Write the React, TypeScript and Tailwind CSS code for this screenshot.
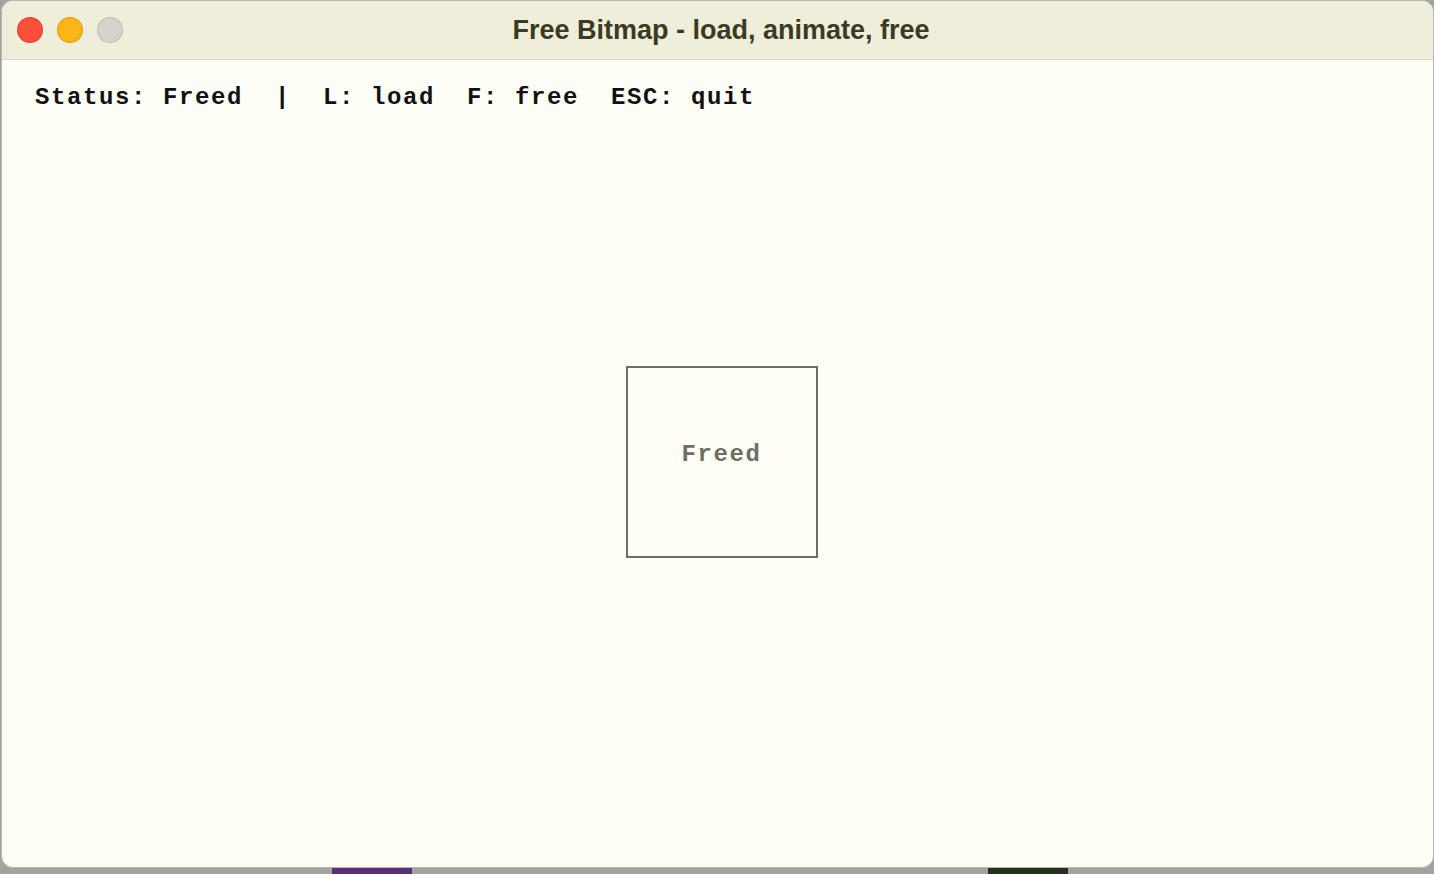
import React from "react";

const mono = { fontFamily: '"Liberation Mono", "DejaVu Sans Mono", monospace' };

function TrafficLights() {
  return (
    <div className="flex items-center gap-4 pl-[16px]">
      <span className="h-6 w-6 rounded-full bg-[#fe4f3c] ring-1 ring-[#d9412f]" />
      <span className="h-6 w-6 rounded-full bg-[#fdb618] ring-1 ring-[#dc9a14]" />
      <span className="h-6 w-6 rounded-full bg-[#d5d4ca] ring-1 ring-[#bdbcb2]" />
    </div>
  );
}

export default function App() {
  return (
    <div className="h-[874px] w-[1434px] overflow-hidden bg-[#a3a3a0]">
      <div className="ml-[1px] flex h-[868px] w-[1433px] flex-col overflow-hidden rounded-[12px] border border-[#b9b8ae] bg-[#fefef6]">
        {/* title bar */}
        <div className="relative flex h-[59px] shrink-0 items-center border-b border-[#d6d5c8] bg-[#efeedb]">
          <TrafficLights />
          <div
            className="absolute inset-x-0 top-0 flex h-full items-center justify-center pl-[7px] text-[27px] font-bold text-[#3b3a22]"
            style={{ fontFamily: '"Liberation Sans", Arial, sans-serif' }}
          >
            Free Bitmap - load, animate, free
          </div>
        </div>

        {/* content */}
        <div className="flex flex-1 flex-col" style={mono}>
          <div className="whitespace-pre pl-[33px] pt-[23px] text-[24px] font-bold leading-[30px] tracking-[1.6px] text-[#111]">
            {"Status: Freed  |  L: load  F: free  ESC: quit"}
          </div>
          <div className="flex justify-center pl-[8px] pt-[253px]">
            <div className="flex h-[192px] w-[192px] items-start justify-center border-2 border-[#6f6e64] pt-[72px]">
              <span className="text-[24px] font-bold leading-[30px] tracking-[1.6px] text-[#6f6e64]">Freed</span>
            </div>
          </div>
        </div>
      </div>
      <div className="flex h-[6px]">
        <div className="ml-[332px] h-full w-[80px] bg-[#5a2d7c]" />
        <div className="ml-[576px] h-full w-[80px] bg-[#23301f]" />
      </div>
    </div>
  );
}
